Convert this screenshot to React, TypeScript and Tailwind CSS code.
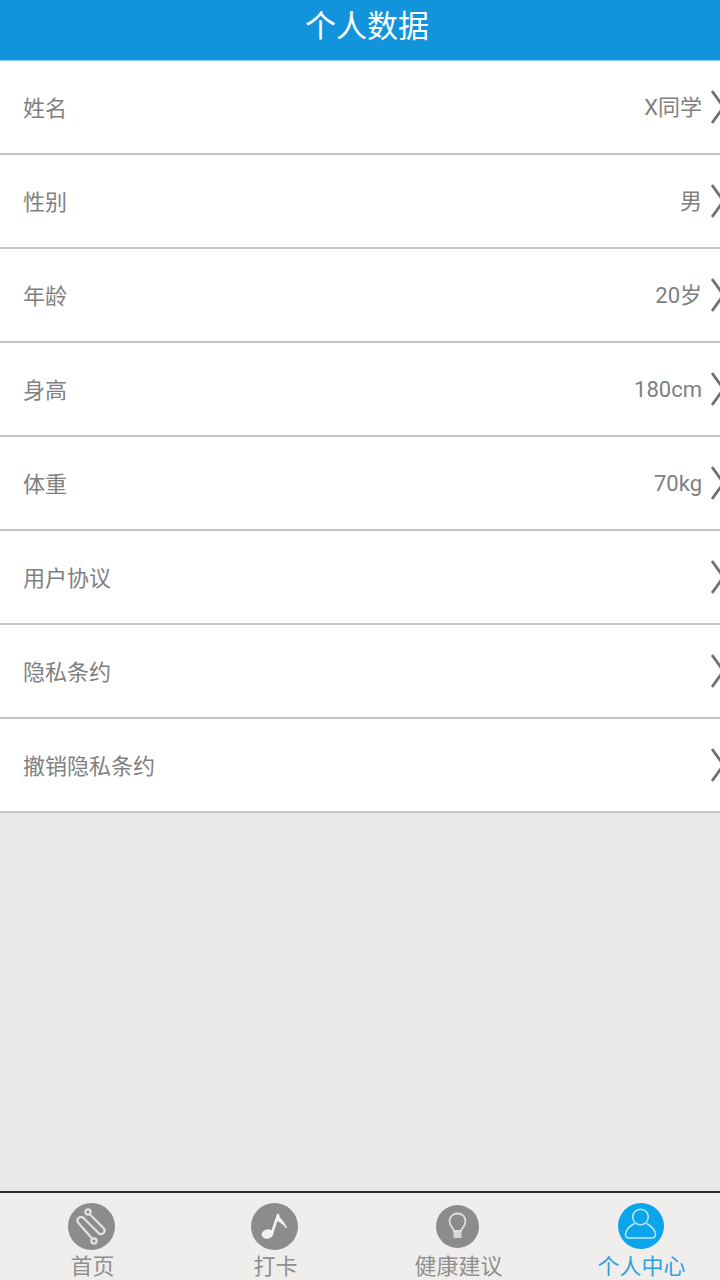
import React from 'react';

const rows = [
  { label: '姓名', value: 'X同学' },
  { label: '性别', value: '男' },
  { label: '年龄', value: '20岁' },
  { label: '身高', value: '180cm' },
  { label: '体重', value: '70kg' },
  { label: '用户协议' },
  { label: '隐私条约' },
  { label: '撤销隐私条约' },
];

const Chevron = () => (
  <svg width="14" height="34" viewBox="0 0 14 34" fill="none" className="shrink-0 text-[#707070]">
    <path d="M1 1 L12.5 17 L1 33" stroke="currentColor" strokeWidth="2.8" />
  </svg>
);

const HomeIcon = () => (
  <svg width="47" height="47" viewBox="0 0 47 47" fill="none">
    <circle cx="23.5" cy="23.5" r="23.5" fill="#8c8c8c" />
    <g stroke="#e2e2e2" strokeWidth="2.2" strokeLinecap="round" strokeLinejoin="round">
      <circle cx="20" cy="9" r="2.6" />
      <circle cx="26" cy="38" r="2.6" />
      <path d="M21.5 11 L36 25.5 A3.6 3.6 0 0 1 31 30.5 L15 14.5 A3.6 3.6 0 0 0 10 19.5 L24.5 36" />
    </g>
  </svg>
);

const NoteIcon = () => (
  <svg width="47" height="47" viewBox="0 0 47 47" fill="none">
    <circle cx="23.5" cy="23.5" r="23.5" fill="#8c8c8c" />
    <ellipse cx="16.5" cy="31" rx="6" ry="4.6" fill="#f2f2f2" transform="rotate(-15 16.5 31)" />
    <path d="M21 30 L27 12" stroke="#f2f2f2" strokeWidth="2.6" strokeLinecap="round" />
    <path d="M27 11.5 C28.5 15.5 33 18 35.5 25 C33 21.5 29.5 19.5 25.5 17 Z" fill="#f2f2f2" stroke="#f2f2f2" strokeWidth="1" strokeLinejoin="round" />
  </svg>
);

const BulbIcon = () => (
  <svg width="43" height="43" viewBox="0 0 43 43" fill="none">
    <circle cx="21.5" cy="21.5" r="21.5" fill="#8c8c8c" />
    <path
      d="M18 26 C18 23.5 13.5 21.5 13.5 16 C13.5 11.5 17 8.5 21.5 8.5 C26 8.5 29.5 11.5 29.5 16 C29.5 21.5 25 23.5 25 26 Z"
      stroke="#dedede"
      strokeWidth="1.8"
    />
    <rect x="17.5" y="27" width="8" height="6" fill="#d6d6d6" />
  </svg>
);

const UserIcon = () => (
  <svg width="46" height="46" viewBox="0 0 46 46" fill="none">
    <circle cx="23" cy="23" r="23" fill="#0ba5ec" />
    <circle cx="22.5" cy="14" r="7.8" stroke="#bfe8fb" strokeWidth="1.5" />
    <path
      d="M16.5 20.5 C11.5 23 8 27 7.5 31.5 C7.3 34 9 35 11 35 H34 C36 35 37.7 34 37.5 31.5 C37 27 33.5 23 28.5 20.5"
      stroke="#bfe8fb"
      strokeWidth="1.5"
    />
  </svg>
);

const tabs = [
  { label: '首页', icon: <HomeIcon />, active: false },
  { label: '打卡', icon: <NoteIcon />, active: false },
  { label: '健康建议', icon: <BulbIcon />, active: false },
  { label: '个人中心', icon: <UserIcon />, active: true },
];

export default function App() {
  return (
    <div className="w-[720px] h-[1280px] flex flex-col overflow-hidden bg-[#e9e9e9] font-['Roboto','Noto_Sans_CJK_SC',sans-serif]">
      {/* Header */}
      <div className="h-[61px] shrink-0 bg-[#1194dc] border-b border-[#8fd0f2] flex items-center justify-center">
        <h1 className="text-[31px] leading-none font-normal text-white pl-[14px] pb-[8px]">个人数据</h1>
      </div>

      {/* Rows */}
      <div className="flex-1 flex flex-col">
        {rows.map((row) => (
          <div
            key={row.label}
            className="h-[94px] shrink-0 bg-white border-b-2 border-[#c4c4c4] flex items-center justify-between pl-[23px]"
          >
            <span className="pt-[2px] text-[22px] text-[#808080]">{row.label}</span>
            <div className="flex items-center gap-[9px] mr-[-5px]">
              {row.value && <span className="text-[22px] text-[#808080]">{row.value}</span>}
              <Chevron />
            </div>
          </div>
        ))}
      </div>

      {/* Tab bar */}
      <div className="h-[89px] shrink-0 bg-[#efeeec] border-t-2 border-[#2b2b2b] grid grid-cols-[183px_183px_183px_183px]">
        {tabs.map((tab) => (
          <div key={tab.label} className="flex flex-col items-center pt-[9px]">
            <div className="h-[48px] flex items-center justify-center">{tab.icon}</div>
            <span className={`mt-[4px] ml-[2px] text-[22px] leading-[26px] whitespace-nowrap ${tab.active ? 'text-[#2f9fe0]' : 'text-[#8f8f8f]'}`}>
              {tab.label}
            </span>
          </div>
        ))}
      </div>
    </div>
  );
}
